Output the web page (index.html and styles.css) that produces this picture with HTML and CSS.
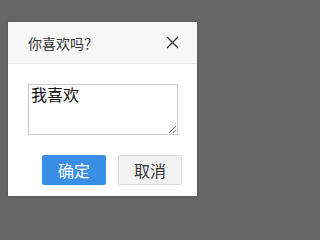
FILE: index.html
```
<!DOCTYPE html>
<html>
<head>
<meta charset="utf-8">
<link rel="stylesheet" href="styles.css">
</head>
<body>
<div class="dialog">
  <div class="header">
    <span class="title">你喜欢吗？</span>
    <span class="close">
      <svg width="13" height="13" viewBox="0 0 13 13"><path d="M1 1L12 12M12 1L1 12" stroke="#333" stroke-width="1.4" fill="none"/></svg>
    </span>
  </div>
  <div class="body">
    <textarea class="input">我喜欢</textarea>
  </div>
  <div class="footer">
    <button class="btn primary">确定</button>
    <button class="btn">取消</button>
  </div>
</div>
</body>
</html>
```
FILE: styles.css
```
html, body {
  margin: 0;
  padding: 0;
  background: #666;
  height: 203px;
  overflow: hidden;
}
body {
  font-family: "Noto Sans CJK SC", "Noto Sans", sans-serif;
}
.dialog {
  margin: 22px 0 0 8px;
  width: 189px;
  height: 174px;
  background: #fff;
  display: flex;
  flex-direction: column;
  box-shadow: 0 0 3px rgba(0,0,0,0.2);
}
.header {
  height: 41px;
  border-bottom: 1px solid #e8e8e8;
  background: #f7f7f7;
  display: flex;
  align-items: center;
  justify-content: space-between;
  padding: 0 18px 0 20px;
}
.title {
  font-size: 14px;
  color: #333;
  line-height: 16px;
}
.close {
  display: flex;
  align-items: center;
}
.body {
  padding: 20px 0 0 20px;
}
.input {
  box-sizing: border-box;
  width: 150px;
  height: 51px;
  margin: 0;
  display: block;
  border: 1px solid #c9c9c9;
  padding: 0 2px;
  font-family: "Noto Sans CJK SC", sans-serif;
  font-size: 16px;
  line-height: 18px;
  color: #111;
  outline: none;
}
.footer {
  display: flex;
  justify-content: flex-end;
  gap: 12px;
  padding: 20px 15px 0 0;
}
.btn {
  width: 64px;
  height: 30px;
  margin: 0;
  padding: 0;
  border: 1px solid #ddd;
  background: #f2f2f2;
  color: #333;
  font-family: "Noto Sans CJK SC", sans-serif;
  font-size: 16px;
  line-height: 20px;
  border-radius: 2px;
}
.btn.primary {
  background: #3a8ee6;
  border-color: #3a8ee6;
  color: #fff;
}
```
